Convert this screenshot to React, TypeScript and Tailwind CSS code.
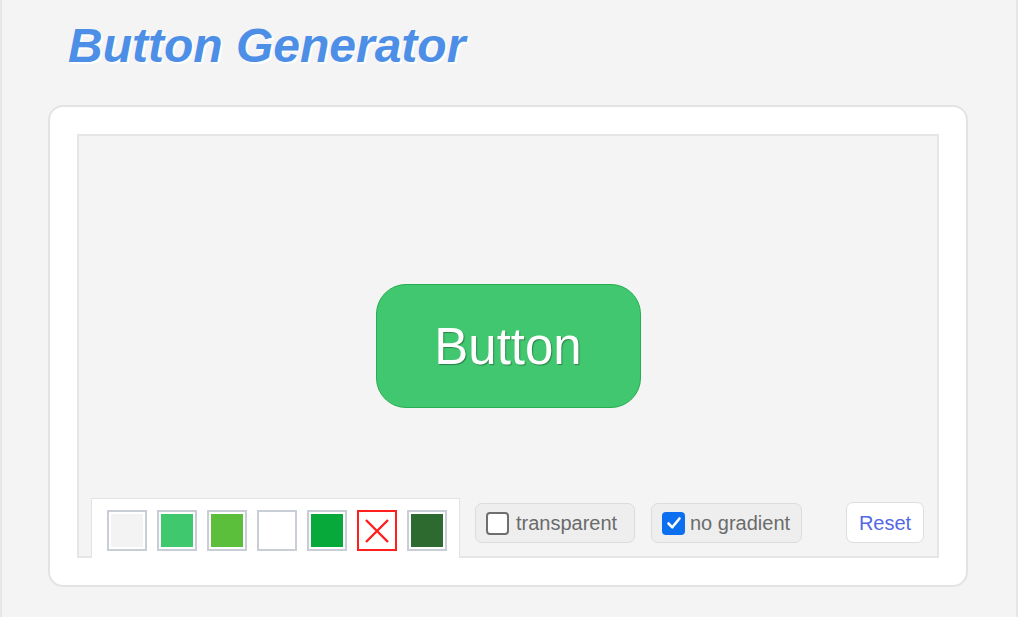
import React from "react";

const font = { fontFamily: '"Liberation Sans", Arial, sans-serif' };

function Swatch({ color }: { color: string }) {
  return (
    <div className="w-[40px] h-[41px] border-2 border-[#c9ced6] bg-white p-[2px]">
      <div className="w-full h-full" style={{ background: color }} />
    </div>
  );
}

function NoneSwatch() {
  return (
    <div className="w-[40px] h-[41px] border-2 border-[#ff1f1f] bg-white flex items-center justify-center">
      <svg width="26" height="26" viewBox="0 0 26 26">
        <path d="M2 2 L24 24 M24 2 L2 24" stroke="#ff1f1f" strokeWidth="2.4" fill="none" />
      </svg>
    </div>
  );
}

export default function App() {
  return (
    <div className="min-h-screen bg-white" style={font}>
      <div className="w-[1018px] h-[617px] bg-[#f4f4f4] border-x-2 border-[#e6e6e6]">
        <h1
          className="pl-[66px] pt-[22px] text-[48px] leading-[48px] font-bold italic text-[#4d8fe6]"
          style={{ textShadow: "2px 2px 0 #ffffff" }}
        >
          Button Generator
        </h1>
        <div className="ml-[46px] mt-[35px] w-[920px] h-[482px] bg-white border-2 border-[#e3e3e3] rounded-[15px] p-[27px]">
          <div className="relative w-full h-full bg-[#f4f4f4] border-2 border-[#e6e6e6] flex items-center justify-center">
            <div
              className="w-[265px] h-[124px] bg-[#40c76f] border border-[#26ae51] rounded-[30px] flex items-center justify-center text-white text-[51px] leading-none"
              style={{ textShadow: "1px 1px 1px rgba(0,0,0,0.35)" }}
            >
              Button
            </div>
            <div className="absolute left-[12px] right-[13px] bottom-[-2px] flex items-end">
              <div className="w-[369px] h-[60px] bg-white border-t border-x border-[#e3e3e3] pl-[15px] pt-[11px] flex gap-[10px]">
                <Swatch color="#f3f3f3" />
                <Swatch color="#3fc86e" />
                <Swatch color="#5bbf3c" />
                <Swatch color="#ffffff" />
                <Swatch color="#06a93a" />
                <NoneSwatch />
                <Swatch color="#2c6a2f" />
              </div>
              <div className="ml-[15px] mb-[15px] w-[160px] h-[40px] bg-[#eeeeee] border border-[#dcdcdc] rounded-[7px] flex items-center pl-[10px] gap-[7px]">
                <div className="w-[23px] h-[23px] bg-white border-2 border-[#6f6f6f] rounded-[4px]" />
                <span className="text-[20px] text-[#6b6b6b] leading-none">transparent</span>
              </div>
              <div className="ml-[16px] mb-[15px] w-[151px] h-[40px] bg-[#eeeeee] border border-[#dcdcdc] rounded-[7px] flex items-center pl-[10px] gap-[5px]">
                <div className="w-[23px] h-[23px] bg-[#0b6ff0] rounded-[4px] flex items-center justify-center">
                  <svg width="16" height="16" viewBox="0 0 16 16">
                    <path d="M2.5 8.5 L6.3 12.3 L13.5 3.5" stroke="#ffffff" strokeWidth="2.6" fill="none" strokeLinecap="round" strokeLinejoin="round" />
                  </svg>
                </div>
                <span className="text-[20px] text-[#6b6b6b] leading-none">no gradient</span>
              </div>
              <div className="ml-auto mb-[15px] w-[78px] h-[41px] bg-white border border-[#dedede] rounded-[7px] flex items-center justify-center text-[20px] text-[#5468e6] leading-none">
                Reset
              </div>
            </div>
          </div>
        </div>
      </div>
    </div>
  );
}
